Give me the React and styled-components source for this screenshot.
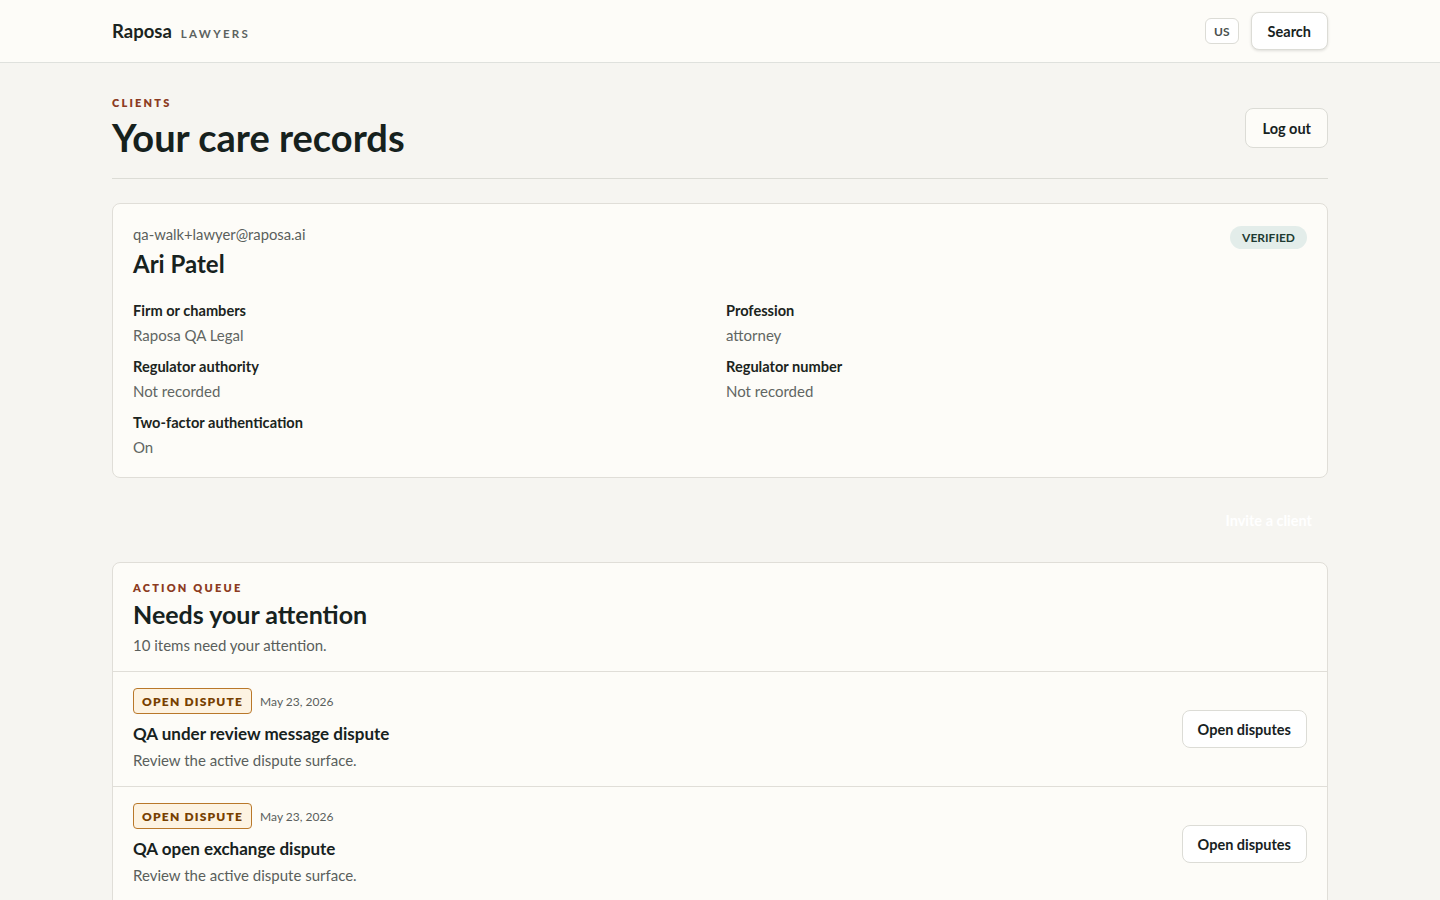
import React from 'react';
import styled, { createGlobalStyle } from 'styled-components';

const profile = {
  email: 'qa-walk+lawyer@raposa.ai',
  name: 'Ari Patel',
  fields: [
    { label: 'Firm or chambers', value: 'Raposa QA Legal' },
    { label: 'Profession', value: 'attorney' },
    { label: 'Regulator authority', value: 'Not recorded' },
    { label: 'Regulator number', value: 'Not recorded' },
    { label: 'Two-factor authentication', value: 'On' }
  ]
};

const queue = [
  { kind: 'Open dispute', date: 'May 23, 2026', title: 'QA under review message dispute', text: 'Review the active dispute surface.', action: 'Open disputes' },
  { kind: 'Open dispute', date: 'May 23, 2026', title: 'QA open exchange dispute', text: 'Review the active dispute surface.', action: 'Open disputes' },
  { kind: 'Open dispute', date: 'May 23, 2026', title: 'QA closed exchange dispute', text: 'Review the active dispute surface.', action: 'Open disputes' }
];

const GlobalStyle = createGlobalStyle`
  body {
    margin: 0;
    background: #f6f5f1;
    font-family: Lato, 'Noto Sans', sans-serif;
    color: #17221e;
  }
  * { box-sizing: border-box; }
`;

const Header = styled.header`
  height: 63px;
  background: #fdfcf8;
  border-bottom: 1px solid #dfe1dd;
`;

const Bar = styled.div`
  max-width: 1216px;
  height: 100%;
  margin: 0 auto;
  display: flex;
  align-items: center;
  justify-content: space-between;
`;

const Brand = styled.div`
  display: flex;
  align-items: baseline;
  gap: 9px;
`;

const BrandName = styled.span`
  font-size: 18.5px;
  font-weight: 700;
  color: #1b2420;
`;

const BrandTag = styled.span`
  font-size: 11.5px;
  font-weight: 700;
  letter-spacing: 0.2em;
  color: #5b625f;
`;

const HeaderActions = styled.div`
  display: flex;
  align-items: center;
  gap: 12px;
`;

const Locale = styled.span`
  height: 26px;
  padding: 0 8px;
  display: inline-flex;
  align-items: center;
  border: 1px solid #dcdcd6;
  border-radius: 6px;
  background: #fff;
  font-size: 12px;
  font-weight: 700;
  color: #4a514e;
`;

const Button = styled.button`
  height: ${p => (p.$tall ? 40 : 38)}px;
  padding: 0 ${p => (p.$wide ? 16 : 15)}px;
  border: 1px solid #dcdcd6;
  border-radius: 8px;
  background: ${p => (p.$white ? '#fff' : '#fdfcf8')};
  box-shadow: ${p => (p.$raised ? '0 1px 3px rgba(0,0,0,0.12)' : 'none')};
  font-family: inherit;
  font-size: 14.5px;
  font-weight: 700;
  color: #17221e;
  cursor: pointer;
`;

const Main = styled.main`
  max-width: 1216px;
  margin: 0 auto;
  padding-top: 33px;
`;

const PageHead = styled.div`
  display: flex;
  justify-content: space-between;
  align-items: center;
  padding-bottom: 18px;
  border-bottom: 1px solid #dcdcd6;
`;

const Eyebrow = styled.div`
  font-size: 11px;
  font-weight: 800;
  letter-spacing: 0.2em;
  text-transform: uppercase;
  color: #8c3b22;
`;

const Title = styled.h1`
  margin: 5px 0 0;
  font-size: 38px;
  line-height: 46px;
  font-weight: 700;
  color: #16211d;
`;

const Card = styled.section`
  margin-top: ${p => p.$top || 0}px;
  background: #fdfcf8;
  border: 1px solid #e0ded8;
  border-radius: 8px;
  padding: ${p => (p.$flush ? '0' : '20px')};
  overflow: hidden;
`;

const CardTop = styled.div`
  display: flex;
  justify-content: space-between;
  align-items: flex-start;
`;

const Email = styled.div`
  font-size: 14.8px;
  line-height: 20px;
  color: #5a5f5c;
`;

const Name = styled.h2`
  margin: 5px 0 0;
  font-size: 24px;
  line-height: 30px;
  font-weight: 700;
`;

const Pill = styled.span`
  margin-top: 2px;
  padding: 4px 12px;
  border-radius: 999px;
  background: #e3edea;
  color: #1e3b32;
  font-size: 12px;
  font-weight: 700;
`;

const Fields = styled.dl`
  margin: 22px 0 0;
  display: grid;
  grid-template-columns: 1fr 1fr;
  column-gap: 12px;
  row-gap: 12px;
`;

const Field = styled.div``;

const Label = styled.dt`
  font-size: 14.6px;
  line-height: 20px;
  font-weight: 700;
  color: #1b2420;
`;

const Value = styled.dd`
  margin: 4px 0 0;
  font-size: 15px;
  line-height: 20px;
  color: #616663;
`;

const InviteRow = styled.div`
  display: flex;
  justify-content: flex-end;
  margin-top: 22px;
`;

const GhostButton = styled.button`
  height: 40px;
  padding: 0 16px;
  border: none;
  background: transparent;
  color: #fff;
  font-family: inherit;
  font-size: 14.5px;
  font-weight: 700;
`;

const QueueHead = styled.div`
  padding: 18px 20px 16px;
  border-bottom: 1px solid #e0ded8;
`;

const QueueTitle = styled.h2`
  margin: 4px 0 0;
  font-size: 25px;
  line-height: 32px;
  font-weight: 700;
`;

const Sub = styled.p`
  margin: 5px 0 0;
  font-size: 15px;
  line-height: 20px;
  color: #5a5f5c;
`;

const Item = styled.div`
  display: flex;
  justify-content: space-between;
  align-items: center;
  padding: 16px 20px;
  border-bottom: 1px solid #e0ded8;
`;

const Meta = styled.div`
  display: flex;
  align-items: center;
  gap: 8px;
`;

const Badge = styled.span`
  height: 26px;
  padding: 0 8px;
  display: inline-flex;
  align-items: center;
  border: 1px solid #b9782a;
  border-radius: 4px;
  background: #fdf3e2;
  color: #774000;
  font-size: 12px;
  font-weight: 800;
  letter-spacing: 0.1em;
  text-transform: uppercase;
`;

const DateText = styled.span`
  font-size: 12px;
  color: #5a5f5c;
`;

const ItemTitle = styled.h3`
  margin: 8px 0 0;
  font-size: 17px;
  line-height: 24px;
  font-weight: 700;
`;

const ItemText = styled.p`
  margin: 4px 0 0;
  font-size: 15px;
  line-height: 20px;
  color: #5a5f5c;
`;

export default function App() {
  return (
    <>
      <GlobalStyle />
      <Header>
        <Bar>
          <Brand>
            <BrandName>Raposa</BrandName>
            <BrandTag>LAWYERS</BrandTag>
          </Brand>
          <HeaderActions>
            <Locale>US</Locale>
            <Button $white $raised $wide>Search</Button>
          </HeaderActions>
        </Bar>
      </Header>
      <Main>
        <PageHead>
          <div>
            <Eyebrow>Clients</Eyebrow>
            <Title>Your care records</Title>
          </div>
          <Button $tall $wide>Log out</Button>
        </PageHead>

        <Card $top={24}>
          <CardTop>
            <div>
              <Email>{profile.email}</Email>
              <Name>{profile.name}</Name>
            </div>
            <Pill>VERIFIED</Pill>
          </CardTop>
          <Fields>
            {profile.fields.map(f => (
              <Field key={f.label}>
                <Label>{f.label}</Label>
                <Value>{f.value}</Value>
              </Field>
            ))}
          </Fields>
        </Card>

        <InviteRow>
          <GhostButton>Invite a client</GhostButton>
        </InviteRow>

        <Card $top={22} $flush>
          <QueueHead>
            <Eyebrow>Action queue</Eyebrow>
            <QueueTitle>Needs your attention</QueueTitle>
            <Sub>10 items need your attention.</Sub>
          </QueueHead>
          {queue.map((q, i) => (
            <Item key={i}>
              <div>
                <Meta>
                  <Badge>{q.kind}</Badge>
                  <DateText>{q.date}</DateText>
                </Meta>
                <ItemTitle>{q.title}</ItemTitle>
                <ItemText>{q.text}</ItemText>
              </div>
              <Button $white>{q.action}</Button>
            </Item>
          ))}
        </Card>
      </Main>
    </>
  );
}
